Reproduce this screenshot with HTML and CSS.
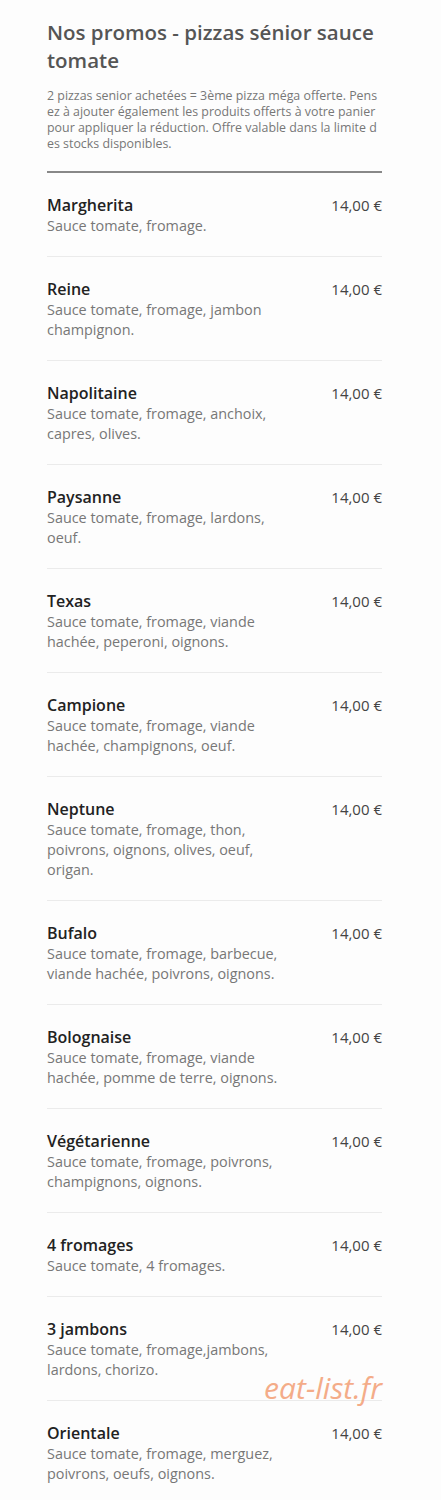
FILE: index.html
```html
<!DOCTYPE html>
<html lang="fr">

<head>
    <meta charset="UTF-8">
    <meta name="viewport" content="width=device-width, initial-scale=1.0">
    <title>Nos promos - pizzas sénior sauce tomate</title>
    <link rel="stylesheet" href="styles.css">
</head>

<body>
    <div class="menu">
        <h2 class="menu__title">Nos promos - pizzas sénior sauce tomate</h2>
        <p class="menu__intro">2 pizzas senior achetées = 3ème pizza méga offerte. Pensez à ajouter également les produits offerts à votre panier pour appliquer la réduction. Offre valable dans la limite des stocks disponibles.</p>

        <ul class="menu__list">
            <li class="item">
                <div class="item__text">
                    <h4>Margherita</h4>
                    <p>Sauce tomate, fromage.</p>
                </div>
                <span class="item__price">14,00 €</span>
            </li>
            <li class="item">
                <div class="item__text">
                    <h4>Reine</h4>
                    <p>Sauce tomate, fromage, jambon champignon.</p>
                </div>
                <span class="item__price">14,00 €</span>
            </li>
            <li class="item">
                <div class="item__text">
                    <h4>Napolitaine</h4>
                    <p>Sauce tomate, fromage, anchoix, capres, olives.</p>
                </div>
                <span class="item__price">14,00 €</span>
            </li>
            <li class="item">
                <div class="item__text">
                    <h4>Paysanne</h4>
                    <p>Sauce tomate, fromage, lardons, oeuf.</p>
                </div>
                <span class="item__price">14,00 €</span>
            </li>
            <li class="item">
                <div class="item__text">
                    <h4>Texas</h4>
                    <p>Sauce tomate, fromage, viande hachée, peperoni, oignons.</p>
                </div>
                <span class="item__price">14,00 €</span>
            </li>
            <li class="item">
                <div class="item__text">
                    <h4>Campione</h4>
                    <p>Sauce tomate, fromage, viande hachée, champignons, oeuf.</p>
                </div>
                <span class="item__price">14,00 €</span>
            </li>
            <li class="item">
                <div class="item__text">
                    <h4>Neptune</h4>
                    <p>Sauce tomate, fromage, thon, poivrons, oignons, olives, oeuf, origan.</p>
                </div>
                <span class="item__price">14,00 €</span>
            </li>
            <li class="item">
                <div class="item__text">
                    <h4>Bufalo</h4>
                    <p>Sauce tomate, fromage, barbecue, viande hachée, poivrons, oignons.</p>
                </div>
                <span class="item__price">14,00 €</span>
            </li>
            <li class="item">
                <div class="item__text">
                    <h4>Bolognaise</h4>
                    <p>Sauce tomate, fromage, viande hachée, pomme de terre, oignons.</p>
                </div>
                <span class="item__price">14,00 €</span>
            </li>
            <li class="item">
                <div class="item__text">
                    <h4>Végétarienne</h4>
                    <p>Sauce tomate, fromage, poivrons, champignons, oignons.</p>
                </div>
                <span class="item__price">14,00 €</span>
            </li>
            <li class="item">
                <div class="item__text">
                    <h4>4 fromages</h4>
                    <p>Sauce tomate, 4 fromages.</p>
                </div>
                <span class="item__price">14,00 €</span>
            </li>
            <li class="item">
                <div class="item__text">
                    <h4>3 jambons</h4>
                    <p>Sauce tomate, fromage,jambons, lardons, chorizo.</p>
                </div>
                <span class="item__price">14,00 €</span>
            </li>
            <li class="item">
                <div class="item__text">
                    <h4>Orientale</h4>
                    <p>Sauce tomate, fromage, merguez, poivrons, oeufs, oignons.</p>
                </div>
                <span class="item__price">14,00 €</span>
            </li>
        </ul>
        <span class="watermark">eat-list.fr</span>
    </div>
</body>

</html>
```

FILE: styles.css
```css
* {
    margin: 0;
    padding: 0;
    box-sizing: border-box;
}

body {
    background: #fdfdfd;
    font-family: 'Open Sans', 'Noto Sans', sans-serif;
    color: #333;
}

.menu {
    position: relative;
    width: 335px;
    margin-left: 47px;
    padding-top: 18px;
}

.menu__title {
    font-size: 20.5px;
    line-height: 28px;
    font-weight: 600;
    color: #555;
}

.menu__intro {
    margin-top: 14px;
    font-size: 12.4px;
    line-height: 16px;
    color: #777;
    word-break: break-all;
}

.menu__list {
    list-style: none;
    margin-top: 19px;
    border-top: 2px solid #888;
}

.item {
    display: flex;
    justify-content: space-between;
    align-items: flex-start;
    padding: 21px 0 20px;
    border-bottom: 1px solid #ebebeb;
}

.item__text {
    width: 240px;
}

.item h4 {
    font-size: 16px;
    line-height: 22px;
    font-weight: 600;
    color: #222;
}

.item p {
    font-size: 14.4px;
    line-height: 20px;
    color: #777;
}

.item__price {
    font-size: 15px;
    line-height: 22px;
    color: #444;
}

.watermark {
    position: absolute;
    top: 1367px;
    right: 0;
    font-size: 30px;
    font-style: italic;
    color: #f4a47c;
    opacity: 0.9;
}
```
